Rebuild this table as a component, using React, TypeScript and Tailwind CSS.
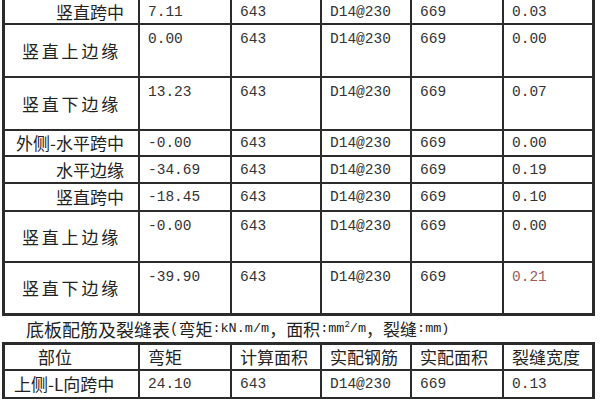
import React from "react";

type Row = {
  label: string;
  align: "right" | "spread";
  moment: string;
  h: string;
  tall?: boolean;
  crack: string;
  red?: boolean;
};

const COLS = "grid grid-cols-[135px_92px_90px_90px_92px_88px]";
const CJK = "font-['Noto_Sans_CJK_SC',sans-serif]";
const MONO = "font-['Liberation_Mono',monospace]";

const rows: Row[] = [
  { label: "竖直跨中", align: "right", moment: "7.11", h: "h-[25px]", crack: "0.03" },
  { label: "竖直上边缘", align: "spread", moment: "0.00", h: "h-[53px]", tall: true, crack: "0.00" },
  { label: "竖直下边缘", align: "spread", moment: "13.23", h: "h-[53px]", tall: true, crack: "0.07" },
  { label: "外侧-水平跨中", align: "right", moment: "-0.00", h: "h-[26px]", crack: "0.00" },
  { label: "水平边缘", align: "right", moment: "-34.69", h: "h-[27px]", crack: "0.19" },
  { label: "竖直跨中", align: "right", moment: "-18.45", h: "h-[28px]", crack: "0.10" },
  { label: "竖直上边缘", align: "spread", moment: "-0.00", h: "h-[51px]", tall: true, crack: "0.00" },
  { label: "竖直下边缘", align: "spread", moment: "-39.90", h: "h-[50px]", tall: true, crack: "0.21", red: true },
];

function NumCell({ v, tall, last, red, bottom }: { v: string; tall?: boolean; last?: boolean; red?: boolean; bottom: boolean }) {
  return (
    <div
      className={`${MONO} text-[14.5px] leading-[20px] pl-[8px] flex ${tall ? "items-start pt-[4px]" : "items-center"} ${
        last ? "" : "border-r-2"
      } ${bottom ? "border-b-2" : ""} border-[#2b2b2b] ${red ? "text-[#a15c5c]" : "text-[#333]"}`}
    >
      {v}
    </div>
  );
}

export default function App() {
  return (
    <div className="w-[600px] h-[400px] bg-white overflow-hidden pl-[2px]">
      {/* 侧壁 table (top cut off) */}
      <div className={`${COLS} w-[593px] border-l-[3px] border-r-[3px] border-b-[3px] border-[#2b2b2b]`}>
        {rows.map((r, i) => {
          const bottom = i < rows.length - 1;
          return (
            <React.Fragment key={i}>
              <div
                className={`${CJK} ${r.h} text-[17px] text-[#222] flex items-center border-r-2 border-[#2b2b2b] ${
                  bottom ? "border-b-2" : ""
                } ${r.align === "right" ? "justify-end pr-[14px]" : "pl-[17px] tracking-[2.8px]"}`}
              >
                {r.label}
              </div>
              <NumCell v={r.moment} tall={r.tall} bottom={bottom} />
              <NumCell v="643" tall={r.tall} bottom={bottom} />
              <NumCell v="D14@230" tall={r.tall} bottom={bottom} />
              <NumCell v="669" tall={r.tall} bottom={bottom} />
              <NumCell v={r.crack} tall={r.tall} last red={r.red} bottom={bottom} />
            </React.Fragment>
          );
        })}
      </div>

      {/* caption */}
      <div className="h-[26px] flex items-center pl-[24px] text-[#222] whitespace-pre">
        <span className={`${CJK} text-[18px]`}>底板配筋及裂缝表</span>
        <span className={`${MONO} text-[14px]`}>(</span>
        <span className={`${CJK} text-[17px]`}>弯矩</span>
        <span className={`${MONO} text-[13.5px]`}>:kN.m/m</span>
        <span className={`${CJK} text-[17px]`}>，</span>
        <span className={`${CJK} text-[17px]`}>面积</span>
        <span className={`${MONO} text-[13.5px]`}>
          :mm<sup className="text-[9px]">2</sup>/m
        </span>
        <span className={`${CJK} text-[17px]`}>，</span>
        <span className={`${CJK} text-[17px]`}>裂缝</span>
        <span className={`${MONO} text-[13.5px]`}>:mm)</span>
      </div>

      {/* 底板 table */}
      <div className={`${COLS} w-[593px] border-l-[3px] border-r-[3px] border-t-[3px] border-[#2b2b2b]`}>
        {["部位", "弯矩", "计算面积", "实配钢筋", "实配面积", "裂缝宽度"].map((t, i) => (
          <div
            key={t}
            className={`${CJK} h-[26px] text-[17px] text-[#222] flex items-center border-b-2 border-[#2b2b2b] ${
              i < 5 ? "border-r-2" : ""
            } ${i === 0 ? "pl-[33px]" : "pl-[8px]"}`}
          >
            {t}
          </div>
        ))}
        <div className={`${CJK} h-[28px] text-[17px] text-[#222] flex items-center pl-[9px] border-r-2 border-b-2 border-[#2b2b2b]`}>
          上侧-L向跨中
        </div>
        <NumCell v="24.10" bottom />
        <NumCell v="643" bottom />
        <NumCell v="D14@230" bottom />
        <NumCell v="669" bottom />
        <NumCell v="0.13" last bottom />
      </div>
    </div>
  );
}
